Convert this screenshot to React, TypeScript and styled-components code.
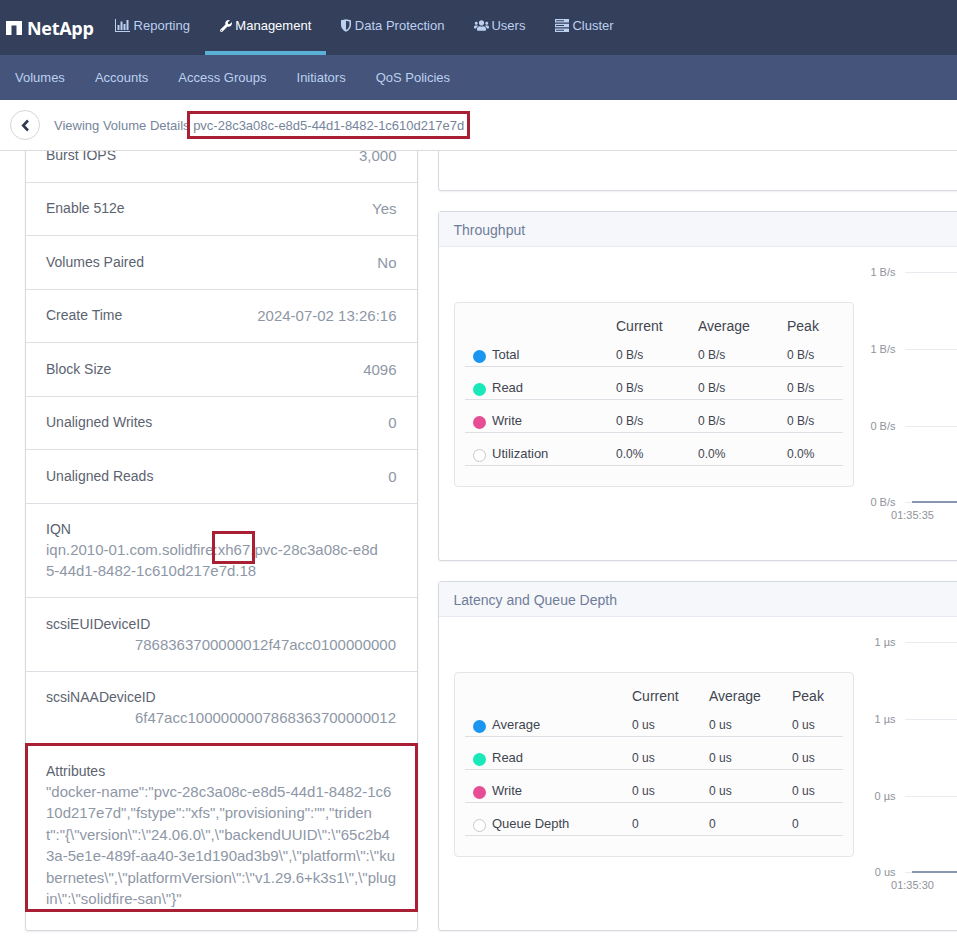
import React from "react";
import styled, { createGlobalStyle } from "styled-components";
import { FaWrench, FaUsers } from "react-icons/fa";

const GlobalStyle = createGlobalStyle`
  html, body {
    margin: 0;
    padding: 0;
    height: 936px;
    overflow: hidden;
    background: #ffffff;
    font-family: "Liberation Sans", Arial, sans-serif;
  }
`;

const detailRows = [
  { label: "Burst IOPS", value: "3,000" },
  { label: "Enable 512e", value: "Yes" },
  { label: "Volumes Paired", value: "No" },
  { label: "Create Time", value: "2024-07-02 13:26:16" },
  { label: "Block Size", value: "4096" },
  { label: "Unaligned Writes", value: "0" },
  { label: "Unaligned Reads", value: "0" },
];

const attributeLines = [
  '"docker-name":"pvc-28c3a08c-e8d5-44d1-8482-1c6',
  '10d217e7d","fstype":"xfs","provisioning":"","triden',
  't":"{\\"version\\":\\"24.06.0\\",\\"backendUUID\\":\\"65c2b4',
  '3a-5e1e-489f-aa40-3e1d190ad3b9\\",\\"platform\\":\\"ku',
  'bernetes\\",\\"platformVersion\\":\\"v1.29.6+k3s1\\",\\"plug',
  'in\\":\\"solidfire-san\\"}"',
];

const throughputRows = [
  { color: "#1a96f0", name: "Total", values: ["0 B/s", "0 B/s", "0 B/s"] },
  { color: "#19e8b8", name: "Read", values: ["0 B/s", "0 B/s", "0 B/s"] },
  { color: "#e64d94", name: "Write", values: ["0 B/s", "0 B/s", "0 B/s"] },
  { color: "", name: "Utilization", values: ["0.0%", "0.0%", "0.0%"] },
];

const latencyRows = [
  { color: "#1a96f0", name: "Average", values: ["0 us", "0 us", "0 us"] },
  { color: "#19e8b8", name: "Read", values: ["0 us", "0 us", "0 us"] },
  { color: "#e64d94", name: "Write", values: ["0 us", "0 us", "0 us"] },
  { color: "", name: "Queue Depth", values: ["0", "0", "0"] },
];

const LogoMark = () => (
  <svg width="16" height="14" viewBox="0 0 16 14">
    <path d="M0 0h16v14h-5.500V4.500h-5V14H0z" fill="#ffffff" />
  </svg>
);

const BarsIcon = () => (
  <svg width="15" height="13" viewBox="0 0 15 13" fill="currentColor">
    <path d="M0 0h1v12h14v1H0z" />
    <path d="M2.500 6h2v5h-2zM5.500 2.500h2V11h-2zM8.500 5h2v6h-2zM11.500 1h2v10h-2z" />
  </svg>
);

const ShieldIcon = () => (
  <svg width="10" height="13" viewBox="0 0 11 14" fill="currentColor">
    <path d="M0 1.200C2 .9 3.800.5 5.500 0 7.200.5 9 .9 11 1.200V6.500c0 3.500-2.500 6-5.500 7.500C2.500 12.500 0 10 0 6.500zM5.500 1.800V12c2-1.200 3.800-3 3.800-5.600V2.700C8 2.500 6.700 2.200 5.500 1.800z" />
  </svg>
);

const ServerIcon = () => (
  <svg width="14" height="13" viewBox="0 0 14 13" fill="currentColor">
    <path d="M0 0h14v3.500H0zM0 4.700h14v3.500H0zM0 9.400h14V13H0z" />
    <path d="M1 1.200h8v1H1zM1 6h8v1H1zM1 10.700h8v1H1z" fill="#333f5b" />
  </svg>
);

const ChevronIcon = () => (
  <svg width="9" height="13" viewBox="0 0 9 13">
    <path d="M7 1.500 2.200 6.500 7 11.500" fill="none" stroke="#2f3a52" strokeWidth="2.600" />
  </svg>
);

type LegendRow = { color: string; name: string; values: string[] };

const Chart = ({ labels, time }: { labels: string[]; time: string }) => (
  <ChartSvg width="100" height="270" viewBox="0 0 100 270">
    {labels.map((label, i) => {
      const y = i === 3 ? 255 : 25 + i * 77;
      return (
        <g key={i}>
          <text x="24.500" y={y + 4} textAnchor="end" fontSize="11" fill="#8f939b">
            {label}
          </text>
          <line x1="34" x2="100" y1={y + 0.5} y2={y + 0.5} stroke="#e8ebef" />
        </g>
      );
    })}
    <line x1="41" x2="100" y1="255" y2="255" stroke="#8896b3" strokeWidth="2" />
    <text x="41.500" y="272" textAnchor="middle" fontSize="11" fill="#8f939b">
      {time}
    </text>
  </ChartSvg>
);

const MetricPanel = ({
  title,
  columns,
  rows,
  axis,
  time,
}: {
  title: string;
  columns: string;
  rows: LegendRow[];
  axis: string[];
  time: string;
}) => (
  <Panel>
    <PanelHeader>{title}</PanelHeader>
    <PanelBody>
      <Legend>
        <LegendHead $columns={columns}>
          <span />
          <span>Current</span>
          <span>Average</span>
          <span>Peak</span>
        </LegendHead>
        {rows.map((row) => (
          <LegendLine key={row.name} $columns={columns}>
            <LegendName>
              <Dot $color={row.color} />
              {row.name}
            </LegendName>
            {row.values.map((value, i) => (
              <span key={i}>{value}</span>
            ))}
          </LegendLine>
        ))}
      </Legend>
      <Chart labels={axis} time={time} />
    </PanelBody>
  </Panel>
);

export default function App() {
  return (
    <Page>
      <GlobalStyle />
      <TopBar>
        <Logo>
          <LogoMark />
          <LogoText>NetApp</LogoText>
        </Logo>
        <TopTab $gap={3.6}>
          <BarsIcon />
          <span>Reporting</span>
        </TopTab>
        <TopTab $active $gap={3.4}>
          <FaWrench size={12} />
          <span>Management</span>
        </TopTab>
        <TopTab $gap={3.6}>
          <ShieldIcon />
          <span>Data Protection</span>
        </TopTab>
        <TopTab $gap={2}>
          <FaUsers size={15} />
          <span>Users</span>
        </TopTab>
        <TopTab $gap={3}>
          <ServerIcon />
          <span>Cluster</span>
        </TopTab>
      </TopBar>
      <SubBar>
        <SubTab>Volumes</SubTab>
        <SubTab>Accounts</SubTab>
        <SubTab>Access Groups</SubTab>
        <SubTab>Initiators</SubTab>
        <SubTab>QoS Policies</SubTab>
      </SubBar>
      <Crumbs>
        <BackButton>
          <ChevronIcon />
        </BackButton>
        <CrumbText>Viewing Volume Details</CrumbText>
        <CrumbId>
          pvc-28c3a08c-e8d5-44d1-8482-1c610d217e7d
          <Callout $inset="-7px -6px -6px -6px" />
        </CrumbId>
      </Crumbs>
      <Content>
        <DetailCard>
          {detailRows.map((row) => (
            <DetailRow key={row.label}>
              <InlineLabel>{row.label}</InlineLabel>
              <RowValue>{row.value}</RowValue>
            </DetailRow>
          ))}
          <StackRow $height={94} $top={17}>
            <RowLabel>IQN</RowLabel>
            <WrapValue>
              iqn.2010-01.com.solidfire:
              <Marked>
                xh67
                <Callout $inset="-10px -5px -6px -6px" />
              </Marked>
              .pvc-28c3a08c-e8d
              <br />
              5-44d1-8482-1c610d217e7d.18
            </WrapValue>
          </StackRow>
          <StackRow $height={74} $top={18}>
            <RowLabel>scsiEUIDeviceID</RowLabel>
            <RightValue>7868363700000012f47acc0100000000</RightValue>
          </StackRow>
          <StackRow $height={72} $top={17}>
            <RowLabel>scsiNAADeviceID</RowLabel>
            <RightValue>6f47acc1000000007868363700000012</RightValue>
          </StackRow>
          <AttributesRow>
            <RowLabel>Attributes</RowLabel>
            <WrapValue>
              {attributeLines.map((line) => (
                <div key={line}>{line}</div>
              ))}
            </WrapValue>
            <Callout $inset="-1px -1px 0 -1px" />
          </AttributesRow>
        </DetailCard>
        <Charts>
          <TopStub />
          <MetricPanel
            title="Throughput"
            columns="151px 82px 89px 1fr"
            rows={throughputRows}
            axis={["1 B/s", "1 B/s", "0 B/s", "0 B/s"]}
            time="01:35:35"
          />
          <MetricPanel
            title="Latency and Queue Depth"
            columns="167px 77px 83px 1fr"
            rows={latencyRows}
            axis={["1 µs", "1 µs", "0 µs", "0 us"]}
            time="01:35:30"
          />
        </Charts>
      </Content>
    </Page>
  );
}

const Page = styled.div`
  width: 957px;
  height: 936px;
  overflow: hidden;
  display: flex;
  flex-direction: column;
`;

const TopBar = styled.div`
  height: 55px;
  flex: none;
  background: #333f5b;
  display: flex;
  align-items: stretch;
  box-sizing: border-box;
  padding-left: 6px;
`;

const Logo = styled.div`
  display: flex;
  align-items: center;
  gap: 5px;
  width: 94px;
  color: #ffffff;
`;

const LogoText = styled.span`
  font-family: "Open Sans", sans-serif;
  font-size: 18px;
  font-weight: 700;
  letter-spacing: -0.3px;
  line-height: 1;
  margin-top: 1px;
`;

const TopTab = styled.div<{ $active?: boolean; $gap: number }>`
  display: flex;
  align-items: center;
  gap: ${(p) => p.$gap}px;
  padding: 0 15px;
  font-size: 13px;
  color: ${(p) => (p.$active ? "#ffffff" : "#bcd0f0")};
  border-bottom: 4px solid ${(p) => (p.$active ? "#5bb0d8" : "transparent")};
  box-sizing: border-box;
`;

const SubBar = styled.div`
  height: 45px;
  flex: none;
  background: #44547a;
  display: flex;
  align-items: center;
  padding-left: 15px;
  padding-bottom: 1px;
  box-sizing: border-box;
  gap: 30px;
`;

const SubTab = styled.span`
  font-size: 13px;
  color: #bcd0f0;
`;

const Crumbs = styled.div`
  height: 51px;
  flex: none;
  box-sizing: border-box;
  background: #ffffff;
  border-bottom: 1px solid #dcdcdc;
  display: flex;
  align-items: center;
  padding-left: 10px;
  font-size: 13px;
  color: #76859b;
`;

const BackButton = styled.div`
  width: 28px;
  height: 28px;
  border: 1px solid #d4d6da;
  border-radius: 50%;
  display: flex;
  align-items: center;
  justify-content: center;
  margin-right: 14px;
`;

const CrumbText = styled.span`
  margin-right: 3.500px;
`;

const CrumbId = styled.span`
  position: relative;
`;

const Callout = styled.span<{ $inset: string }>`
  position: absolute;
  inset: ${(p) => p.$inset};
  border: 3px solid #a91f33;
  pointer-events: none;
`;

const Content = styled.div`
  flex: 1;
  min-height: 0;
  overflow: hidden;
  display: flex;
  align-items: flex-start;
  padding-left: 25px;
  gap: 20px;
  background: #ffffff;
`;

const DetailCard = styled.div`
  width: 393px;
  flex: none;
  margin-top: -23px;
  box-sizing: border-box;
  border: 1px solid #d6d9df;
  border-radius: 3px;
  background: #ffffff;
  box-shadow: 0 1px 2px rgba(0, 0, 0, 0.08);
`;

const DetailRow = styled.div`
  height: 53.500px;
  box-sizing: border-box;
  border-bottom: 1px solid #dcdfe4;
  display: flex;
  align-items: center;
  justify-content: space-between;
  padding: 0 20.500px 0 20px;
`;

const RowLabel = styled.div`
  font-size: 14px;
  color: #5c6370;
`;

const InlineLabel = styled(RowLabel)`
  margin-bottom: 1px;
`;

const RowValue = styled.div`
  font-size: 15px;
  color: #8e97a6;
`;

const StackRow = styled.div<{ $height: number; $top: number }>`
  height: ${(p) => p.$height}px;
  box-sizing: border-box;
  border-bottom: 1px solid #dcdfe4;
  padding: ${(p) => p.$top}px 21px 0 20px;
`;

const WrapValue = styled.div`
  font-size: 15px;
  line-height: 21.500px;
  margin-top: 2px;
  color: #8e97a6;
  white-space: nowrap;
`;

const Marked = styled.span`
  position: relative;
`;

const RightValue = styled(WrapValue)`
  text-align: right;
`;

const AttributesRow = styled.div`
  position: relative;
  box-sizing: border-box;
  height: 168px;
  padding: 19px 20px 0;
  margin-bottom: 18px;
`;

const Charts = styled.div`
  width: 640px;
  flex: none;
  display: flex;
  flex-direction: column;
  gap: 20px;
`;

const TopStub = styled.div`
  height: 40px;
  box-sizing: border-box;
  border: 1px solid #d6d9df;
  border-top: none;
  border-radius: 0 0 3px 3px;
  box-shadow: 0 1px 2px rgba(0, 0, 0, 0.06);
`;

const Panel = styled.div`
  height: 350px;
  box-sizing: border-box;
  border: 1px solid #d6d9df;
  border-radius: 3px;
  background: #ffffff;
  box-shadow: 0 1px 2px rgba(0, 0, 0, 0.06);
`;

const PanelHeader = styled.div`
  height: 35px;
  box-sizing: border-box;
  background: #f6f7fb;
  border-bottom: 1px solid #e8ebf1;
  padding: 1px 0 0 14.500px;
  display: flex;
  align-items: center;
  font-size: 14px;
  color: #6f7d99;
`;

const PanelBody = styled.div`
  display: flex;
  align-items: flex-start;
  padding-left: 15px;
`;

const Legend = styled.div`
  width: 400px;
  height: 185px;
  flex: none;
  margin-top: 55px;
  box-sizing: border-box;
  border: 1px solid #e3e5e8;
  border-radius: 4px;
  background: #fcfcfc;
  padding: 0 10px;
  font-size: 12px;
  color: #3f4550;
`;

const LegendHead = styled.div<{ $columns: string }>`
  display: grid;
  grid-template-columns: ${(p) => p.$columns};
  height: 31px;
  box-sizing: border-box;
  padding-top: 15px;
  font-size: 14px;
  line-height: 16px;
`;

const LegendLine = styled.div<{ $columns: string }>`
  display: grid;
  grid-template-columns: ${(p) => p.$columns};
  height: 33px;
  box-sizing: border-box;
  border-bottom: 1px solid #dcdfe4;
  align-items: end;
  padding-bottom: 3px;
  line-height: 16px;
`;

const LegendName = styled.span`
  display: flex;
  align-items: center;
  gap: 6px;
  padding-left: 8px;
  font-size: 13px;
`;

const Dot = styled.i<{ $color: string }>`
  width: 13px;
  height: 13px;
  box-sizing: border-box;
  border-radius: 50%;
  margin-top: 3px;
  background: ${(p) => p.$color || "#ffffff"};
  border: ${(p) => (p.$color ? "none" : "1px solid #c4c9d2")};
`;

const ChartSvg = styled.svg`
  flex: none;
  margin-left: 17px;
  overflow: visible;
`;
